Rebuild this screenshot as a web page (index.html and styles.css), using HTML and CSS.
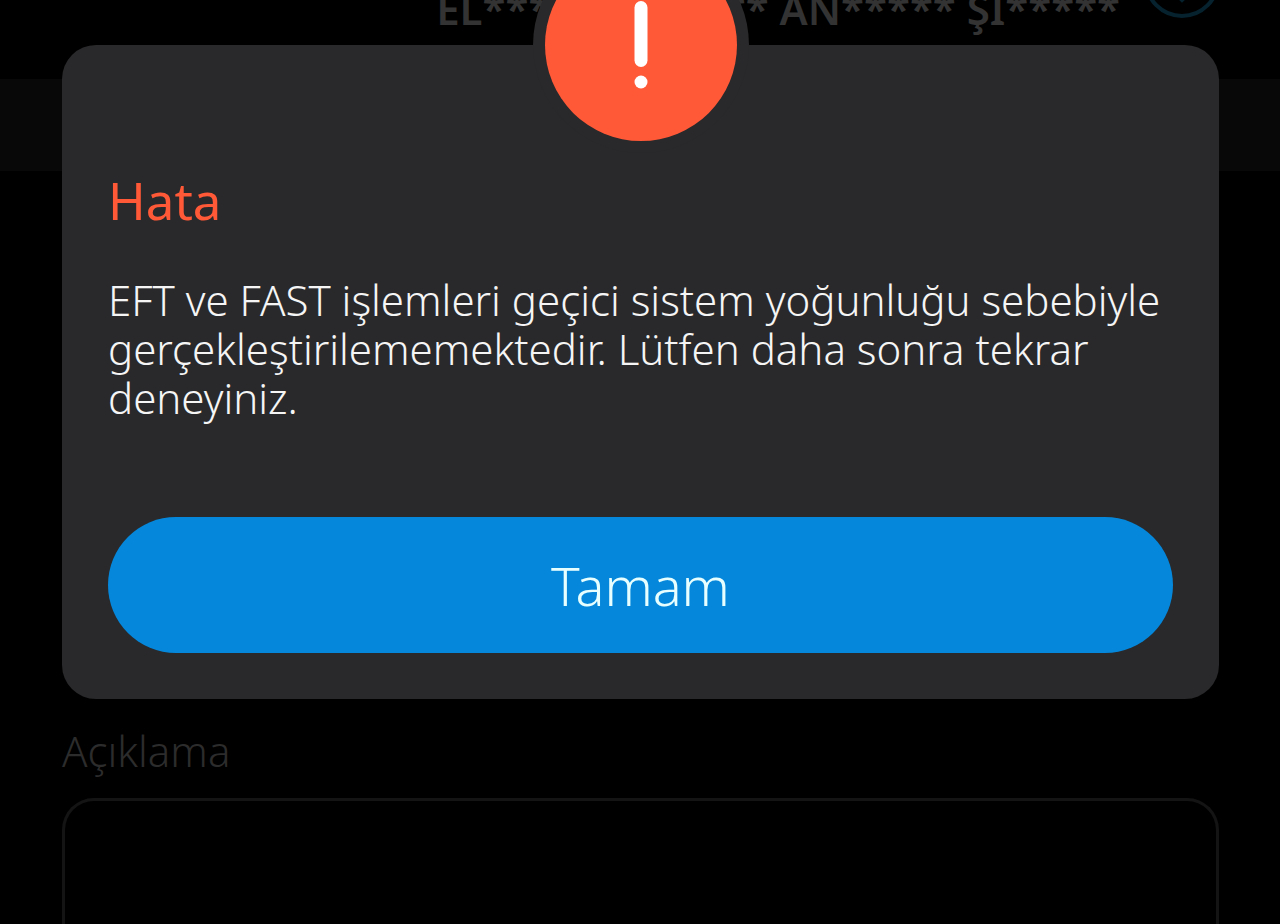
FILE: index.html
```
<!doctype html>
<html lang="tr">
<head>
  <meta charset="utf-8">
  <title>Hata</title>
  <meta name="viewport" content="width=device-width, initial-scale=1">
  <link rel="stylesheet" href="styles.css">
</head>
<body>

<main class="page">
  <div class="recipient">
    <span>EL****** ****** AN***** Şİ*****</span>
    <svg class="info" viewBox="0 0 76 76" aria-hidden="true">
      <circle cx="38" cy="38" r="36"/>
      <path d="M38 20v38M28 48l10 10 10-10"/>
    </svg>
  </div>
  <div class="band"></div>
  <div class="field">
    <label for="note">Açıklama</label>
    <textarea id="note" rows="1"></textarea>
  </div>
</main>

<div class="overlay">
  <div class="dialog" role="alertdialog" aria-labelledby="title" aria-describedby="message">
    <svg class="badge" viewBox="0 0 216 216" aria-hidden="true">
      <circle cx="108" cy="108" r="108" fill="#29292b"/>
      <circle cx="108" cy="108" r="96" fill="#ff5938"/>
      <rect x="101.5" y="64" width="13" height="66" rx="6.5" fill="#fff"/>
      <circle cx="108" cy="145" r="6.5" fill="#fff"/>
    </svg>
    <h1 id="title">Hata</h1>
    <p id="message">EFT ve FAST işlemleri geçici sistem yoğunluğu sebebiyle gerçekleştirilememektedir. Lütfen daha sonra tekrar deneyiniz.</p>
    <button type="button" class="ok">Tamam</button>
  </div>
</div>

</body>
</html>
```
FILE: styles.css
```
* {
  box-sizing: border-box;
}

body {
  margin: 0;
  height: 100vh;
  overflow: hidden;
  background: #000;
  font-family: "Noto Sans", "Open Sans", sans-serif;
  font-weight: 300;
}

/* screen behind the dialog, scrolled and dimmed */
.page {
  display: flex;
  flex-direction: column;
  height: calc(100vh + 60px);
  margin-top: -60px;
}

.recipient {
  display: flex;
  flex: none;
  justify-content: flex-end;
  align-items: flex-end;
  gap: 24px;
  height: 96px;
  padding: 0 60px 0 62px;
  color: #333;
  font-size: 42px;
  font-weight: 600;
  line-height: 54px;
  white-space: nowrap;
}

.info {
  width: 76px;
  height: 76px;
  margin-bottom: 18px;
  fill: none;
  stroke: #06222f;
  stroke-width: 4;
}

.band {
  flex: none;
  height: 92px;
  margin-top: 43px;
  background: #080808;
}

.field {
  display: flex;
  flex: 1;
  flex-direction: column;
  gap: 19px;
  margin-top: 552px;
  padding: 0 61px 0 62px;
}

.field label {
  color: #2c2c2c;
  font-size: 42px;
  line-height: 56px;
}

/* the box carries on below the fold, so it has no bottom edge */
.field textarea {
  flex: 1;
  padding: 24px;
  border: 3px solid #141414;
  border-bottom: 0;
  border-radius: 32px 32px 0 0;
  background: transparent;
  color: #333;
  font: inherit;
  font-size: 42px;
  resize: none;
}

/* dialog */
.overlay {
  position: fixed;
  inset: 0;
  padding: 45px 61px 0 62px;
}

.dialog {
  position: relative;
  padding: 120px 46px 46px;
  border-radius: 34px;
  background: #29292b;
}

.badge {
  position: absolute;
  top: 0;
  left: 50%;
  width: 216px;
  height: 216px;
  transform: translate(-50%, -50%);
}

h1 {
  margin: 0;
  color: #ff5938;
  font-size: 51px;
  font-weight: 400;
  line-height: 70px;
}

p {
  margin: 40px 0 0;
  color: #f5f5f5;
  font-size: 42px;
  line-height: 49px;
}

.ok {
  display: block;
  width: 100%;
  height: 136px;
  margin-top: 95px;
  border: 0;
  border-radius: 68px;
  background: #0588dc;
  color: #e8ffff;
  font: inherit;
  font-size: 54px;
}
```
